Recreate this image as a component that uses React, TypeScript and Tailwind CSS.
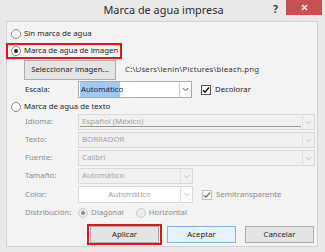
import React from "react";

const F = { fontFamily: '"Noto Sans", "Open Sans", sans-serif' };

function Chevron({ disabled }: { disabled?: boolean }) {
  return (
    <svg width="7" height="5" viewBox="0 0 7 5">
      <path d="M0.8 1 L3.5 3.8 L6.2 1" fill="none" stroke={disabled ? "#c4c4c4" : "#555"} strokeWidth="1" />
    </svg>
  );
}

function Radio({ checked, disabled }: { checked?: boolean; disabled?: boolean }) {
  return (
    <div
      className={`w-[10px] h-[10px] rounded-full border flex items-center justify-center shrink-0 ${
        disabled ? "border-[#c9c9c9] bg-[#ececec]" : "border-[#8a8a8a] bg-white"
      }`}
    >
      {checked && <div className={`w-[4px] h-[4px] rounded-full ${disabled ? "bg-[#8a8a8a]" : "bg-[#222]"}`} />}
    </div>
  );
}

function Check({ disabled }: { disabled?: boolean }) {
  return (
    <div
      className={`w-[10px] h-[10px] border flex items-center justify-center shrink-0 ${
        disabled ? "border-[#bdbdbd] bg-white" : "border-[#555] bg-white"
      }`}
    >
      <svg width="8" height="8" viewBox="0 0 8 8">
        <path d="M1 4.2 L3 6.2 L7 1.4" fill="none" stroke={disabled ? "#7a7a7a" : "#111"} strokeWidth="1.5" />
      </svg>
    </div>
  );
}

function DisabledCombo({ text, w, underline }: { text: string; w: string; underline?: boolean }) {
  return (
    <div className={`${w} h-[16px] border border-[#d9d9d9] bg-[#f0f0f0] flex relative`}>
      <div className="flex-1 flex items-center pl-[3px] text-[7.8px] text-[#a3a3a3] whitespace-nowrap">{text}</div>
      <div className="w-[12px] border-l border-[#e0e0e0] flex items-center justify-center">
        <Chevron disabled />
      </div>
      {underline && <div className="absolute left-[1px] right-[13px] bottom-[2px] h-[1px] bg-[#9a9a9a]" />}
    </div>
  );
}

function Label({ children, disabled }: { children: React.ReactNode; disabled?: boolean }) {
  return (
    <div className={`w-[53px] shrink-0 whitespace-nowrap text-[7.8px] ${disabled ? "text-[#8c8c8c]" : "text-[#2a2a2a]"}`}>
      {children}
    </div>
  );
}

function Btn({ children, blue }: { children: React.ReactNode; blue?: boolean }) {
  return (
    <div
      className={`w-[69px] h-[17px] flex items-center justify-center whitespace-nowrap text-[7.8px] text-[#1e1e1e] ${
        blue ? "border border-[#7eb4ea] bg-[#e5f1fb]" : "border border-[#adadad] bg-[#e4e4e4]"
      }`}
    >
      {children}
    </div>
  );
}

export default function App() {
  return (
    <div className="w-[325px] h-[252px] bg-[#e9e9e9] flex flex-col overflow-hidden whitespace-nowrap" style={F}>
      {/* title bar */}
      <div className="h-[21px] flex items-start relative">
        <div className="flex-1 h-[21px] flex items-center justify-center pl-[2px] text-[10.9px] text-[#2b2b2b]">
          Marca de agua impresa
        </div>
        <div className="absolute left-[273px] top-[2px] text-[10.5px] font-bold text-[#3a3a3a]">?</div>
        <div className="absolute left-[286px] top-0 w-[36px] h-[15px] bg-[#c75050] flex items-center justify-center">
          <svg width="7" height="7" viewBox="0 0 7 7">
            <path d="M1 1 L6 6 M6 1 L1 6" stroke="#fff" strokeWidth="1.4" />
          </svg>
        </div>
      </div>

      {/* panel */}
      <div className="ml-[6px] mr-[7px] h-[226px] border border-[#d2d2d2] bg-[#f3f3f3] flex flex-col text-[#1e1e1e]">
        <div className="h-[18px] mt-[3px] flex items-center pl-[4px] gap-[3px] text-[7.8px]">
          <Radio />
          <span>Sin marca de agua</span>
        </div>
        <div className="w-[116px] h-[16px] -ml-[1px] border-2 border-[#e3141e] flex items-center pl-[3px] gap-[3px] text-[7.8px] tracking-[-0.05px]">
          <Radio checked />
          <span>Marca de agua de imagen</span>
        </div>
        <div className="h-[20px] mt-[1px] flex items-center">
          <div className="ml-[17px] w-[92px] h-[20px] border border-[#adadad] bg-[#e4e4e4] flex items-center justify-center text-[7.8px]">
            Seleccionar imagen...
          </div>
          <div className="ml-[9px] text-[7.8px] tracking-[0.2px] text-[#333]">C:\Users\lenin\Pictures\bleach.png</div>
        </div>
        <div className="h-[17px] mt-[1px] flex items-center pl-[18px]">
          <Label>Escala:</Label>
          <div className="w-[114px] h-[17px] border border-[#acacac] bg-white flex">
            <div className="flex-1 flex items-center pl-[1px]">
              <span className="bg-[#9fc8f2] text-[#10254a] text-[7.8px] px-[1px] h-[15px] flex items-center w-[40px]">
                Automático
              </span>
            </div>
            <div className="w-[12px] border-l border-[#c8c8c8] flex items-center justify-center">
              <Chevron />
            </div>
          </div>
          <div className="ml-[9px] flex items-center gap-[4px] text-[7.8px]">
            <Check />
            <span>Decolorar</span>
          </div>
        </div>
        <div className="h-[15px] mt-[1px] flex items-center pl-[4px] gap-[3px] text-[7.8px]">
          <Radio />
          <span>Marca de agua de texto</span>
        </div>
        <div className="flex flex-col gap-[2px] pl-[18px]">
          <div className="flex items-center">
            <Label disabled>Idioma:</Label>
            <DisabledCombo text="Español (México)" w="w-[237px]" underline />
          </div>
          <div className="flex items-center">
            <Label disabled>Texto:</Label>
            <DisabledCombo text="BORRADOR" w="w-[237px]" />
          </div>
          <div className="flex items-center">
            <Label disabled>Fuente:</Label>
            <DisabledCombo text="Calibri" w="w-[237px]" />
          </div>
          <div className="flex items-center">
            <Label disabled>Tamaño:</Label>
            <DisabledCombo text="Automático" w="w-[115px]" />
          </div>
          <div className="flex items-center">
            <Label disabled>Color:</Label>
            <div className="w-[115px] h-[17px] border border-[#d9d9d9] bg-white flex">
              <div className="flex-1 flex items-center justify-center text-[7.8px] text-[#a3a3a3]">Automático</div>
              <div className="w-[12px] border-l border-[#e0e0e0] flex items-center justify-center">
                <Chevron disabled />
              </div>
            </div>
            <div className="ml-[9px] flex items-center gap-[4px] text-[7.8px] text-[#8c8c8c]">
              <Check disabled />
              <span>Semitransparente</span>
            </div>
          </div>
        </div>
        <div className="h-[15px] mt-[2px] flex items-center pl-[18px] text-[7.8px] text-[#8c8c8c]">
          <Label disabled>Distribución:</Label>
          <div className="flex items-center gap-[3px]">
            <Radio checked disabled />
            <span>Diagonal</span>
          </div>
          <div className="flex items-center gap-[3px] ml-[12px]">
            <Radio disabled />
            <span>Horizontal</span>
          </div>
        </div>
        <div className="mt-[4px] flex items-center pl-[80px]">
          <div className="w-[75px] h-[21px] border-2 border-[#e3141e] flex items-center justify-center">
            <Btn>Aplicar</Btn>
          </div>
          <div className="ml-[5px]">
            <Btn blue>Aceptar</Btn>
          </div>
          <div className="ml-[9px]">
            <Btn>Cancelar</Btn>
          </div>
        </div>
      </div>
    </div>
  );
}
